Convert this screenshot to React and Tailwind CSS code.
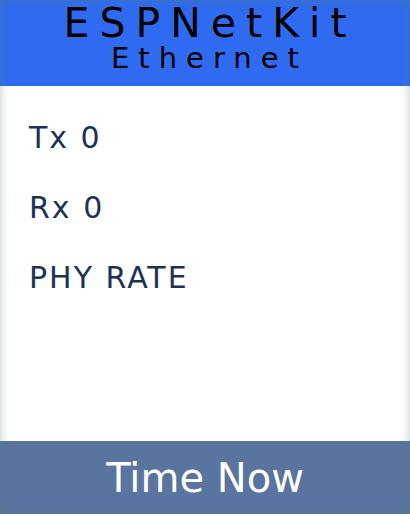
export default function App() {
  return (
    <div className="relative flex h-[514px] w-[410px] flex-col bg-white font-['DejaVu_Sans',sans-serif]">
      <header className="flex h-[86px] flex-col items-center bg-[#2f6bf0] pt-[3px] text-black">
        <h1 className="pl-[10px] text-[41px] leading-[40px] tracking-[10px]">ESPNetKit</h1>
        <h2 className="mt-[2px] pl-[9px] text-[29px] leading-[26px] tracking-[9px]">Ethernet</h2>
      </header>
      <main className="flex flex-1 flex-col gap-[38px] px-[29px] pt-[36px] text-[30px] leading-[32px] tracking-[2px] text-[#1b3256]">
        <div>Tx 0</div>
        <div>Rx 0</div>
        <div>PHY RATE</div>
      </main>
      <footer className="flex h-[73px] items-center justify-center bg-[#5a74a0] text-[40px] text-white">
        Time Now
      </footer>
      <div className="pointer-events-none absolute inset-0 shadow-[inset_0_0_10px_rgba(80,130,110,0.45)]" />
    </div>
  );
}
